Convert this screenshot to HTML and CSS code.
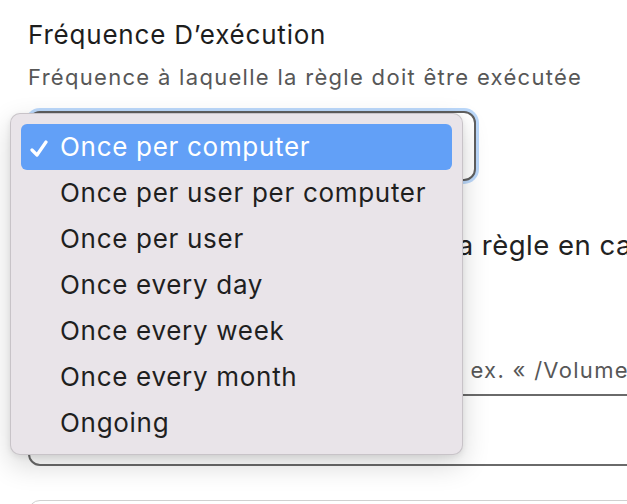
FILE: index.html
```html
<!doctype html>
<html lang="fr">
  <head>
    <meta charset="UTF-8" />
    <meta name="viewport" content="width=device-width, initial-scale=1.0" />
    <title>Fréquence D'exécution</title>
    <link rel="stylesheet" href="styles.css">
  </head>
  <body>
    <div class="page">
      <div class="field">
        <h2 class="field-title">Fréquence D’exécution</h2>
        <p class="field-desc">Fréquence à laquelle la règle doit être exécutée</p>
        <div class="select-box"></div>
      </div>

      <div class="field field-second">
        <p class="field-label">Toujours rejouer l’exécution de la règle en cas d’échec</p>
        <p class="field-hint">Emplacement du fichier de scripts, p. ex. « /Volumes/Data/script.sh »</p>
        <div class="input-box"></div>
      </div>

      <div class="input-box input-box-empty"></div>

      <!-- native select popup, drawn open over the form -->
      <ul class="popup-menu">
        <li class="menu-item selected">
          <svg class="check" viewBox="0 0 18 17" xmlns="http://www.w3.org/2000/svg">
            <path d="M2 10 L7 15 L16 2" />
          </svg>
          Once per computer
        </li>
        <li class="menu-item">Once per user per computer</li>
        <li class="menu-item">Once per user</li>
        <li class="menu-item">Once every day</li>
        <li class="menu-item">Once every week</li>
        <li class="menu-item">Once every month</li>
        <li class="menu-item">Ongoing</li>
      </ul>
    </div>
  </body>
</html>
```

FILE: styles.css
```css
body {
  margin: 0;
  background-color: #ffffff;
  overflow: hidden;
  font-family: Inter, "Noto Sans", sans-serif;
}

.page {
  position: relative;
  width: 720px;
  padding: 19px 0 0 28px;
}

.field {
  display: flex;
  flex-direction: column;
}

.field-title {
  margin: 0;
  font-size: 26px;
  line-height: 32px;
  font-weight: 400;
  letter-spacing: 0.8px;
  color: #1d1d1d;
}

.field-desc {
  margin: 13px 0 0;
  font-size: 22px;
  line-height: 26px;
  letter-spacing: 1.3px;
  color: #575757;
}

.select-box {
  margin-top: 21px;
  width: 448px;
  height: 70px;
  box-sizing: border-box;
  border: 2px solid #5f5f5f;
  border-radius: 12px;
  background-color: #ffffff;
  box-shadow: 0 0 0 3px rgba(120, 178, 245, 0.5);
}

.field-second {
  margin-top: 48px;
}

.field-label {
  margin: 0;
  font-size: 27.5px;
  line-height: 32px;
  letter-spacing: 0.5px;
  color: #222222;
  white-space: nowrap;
}

.field-hint {
  margin: 96px 0 0;
  font-size: 22px;
  line-height: 26px;
  letter-spacing: 1.3px;
  color: #575757;
  white-space: nowrap;
}

.input-box {
  margin-top: 11px;
  width: 680px;
  height: 72px;
  box-sizing: border-box;
  border: 2px solid #6a6a6a;
  border-radius: 12px;
  background-color: #ffffff;
}

.input-box-empty {
  margin-top: 34px;
  border: 1px solid #d0d0d0;
}

.popup-menu {
  position: absolute;
  left: 10px;
  top: 113px;
  width: 453px;
  height: 342px;
  box-sizing: border-box;
  margin: 0;
  padding: 10px 10px;
  list-style: none;
  background-color: #e9e4e9;
  border: 1px solid rgba(0, 0, 0, 0.14);
  border-radius: 10px;
  box-shadow: 0 10px 28px rgba(0, 0, 0, 0.16), 0 2px 6px rgba(0, 0, 0, 0.08);
}

.menu-item {
  position: relative;
  height: 46px;
  padding-left: 39px;
  font-size: 26px;
  line-height: 46px;
  letter-spacing: 0.7px;
  color: #1f1f1f;
  border-radius: 6px;
}

.menu-item.selected {
  background-color: #62a0f7;
  color: #ffffff;
}

.check {
  position: absolute;
  left: 9px;
  top: 16px;
  width: 18px;
  height: 17px;
  fill: none;
  stroke: #ffffff;
  stroke-width: 3.2;
  stroke-linecap: round;
  stroke-linejoin: round;
}
```
